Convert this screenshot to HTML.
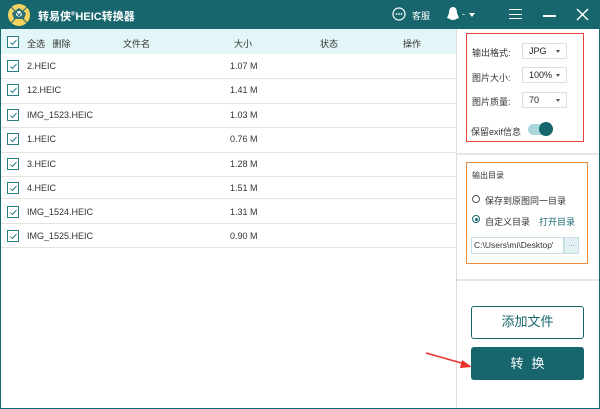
<!DOCTYPE html>
<html><head><meta charset="utf-8"><style>
*{margin:0;padding:0;box-sizing:border-box}
body{width:600px;height:409px;overflow:hidden;font-family:"Liberation Sans","Noto Sans CJK SC",sans-serif;font-size:9px;color:#333;background:#fff;position:relative}
.a{position:absolute}
.win{left:0;top:0;width:600px;height:409px;border:1px solid #176a70;border-top:none}
.title{left:0;top:0;width:600px;height:29px;background:#17666d}
.cb{width:12px;height:12px;border:1px solid #2a7f87;background:#fff}
.cb svg{position:absolute;left:1px;top:1px}
.row{left:1px;width:455px;height:1px;background:#e3e3e3}
.sel{width:45px;height:16px;border:1px solid #ddd;background:#fff;font-size:9px;padding-left:6px;line-height:14px;color:#222}
.sel:after{content:"";position:absolute;right:6px;top:6px;border-left:2px solid transparent;border-right:2px solid transparent;border-top:3px solid #555}
</style></head><body>
<div class="a title"></div>
<div class="a win"></div>
<svg class="a" style="left:7px;top:3px" width="24" height="24" viewBox="0 0 24 24"><circle cx="12" cy="12" r="11" fill="#f4d35e"/><path d="M5 10 L12 5 L19 10 L17 16 L7 16Z" fill="#2e6f74"/><circle cx="12" cy="11" r="3" fill="#fff"/><path d="M4 4 L20 20 M20 4 L4 20" stroke="#2e6f74" stroke-width="1.2"/></svg>
<div class="a" style="left:38px;top:8px;color:#fff;font-size:11px;font-weight:bold">转易侠<sup style="font-size:6px">®</sup>HEIC转换器</div>
<svg class="a" style="left:392px;top:7px" width="14" height="14"><circle cx="7" cy="7" r="6" fill="none" stroke="#fff" stroke-width="1.2"/><circle cx="4.5" cy="7" r=".9" fill="#fff"/><circle cx="7" cy="7" r=".9" fill="#fff"/><circle cx="9.5" cy="7" r=".9" fill="#fff"/></svg>
<div class="a" style="left:412px;top:9px;color:#fff;font-size:9px">客服</div>
<svg class="a" style="left:446px;top:6px" width="14" height="16"><path d="M7 1C4 1 3 4 3 7L1 12C3 12 4 14 7 14C10 14 11 12 13 12L11 7C11 4 10 1 7 1Z" fill="#fff"/></svg>
<div class="a" style="left:462px;top:9px;color:#fff">-</div>
<div class="a" style="left:469px;top:13px;border-left:3px solid transparent;border-right:3px solid transparent;border-top:4px solid #fff"></div>
<div class="a" style="left:509px;top:9px;width:13px;height:10px;border-top:1.5px solid #fff;border-bottom:1.5px solid #fff"></div>
<div class="a" style="left:509px;top:13.5px;width:13px;height:1.5px;background:#fff"></div>
<div class="a" style="left:543px;top:15px;width:13px;height:1.5px;background:#fff"></div>
<svg class="a" style="left:576px;top:8px" width="13" height="13"><path d="M1 1L12 12M12 1L1 12" stroke="#fff" stroke-width="1.5"/></svg>

<div class="a" style="left:1px;top:29px;width:455px;height:25px;background:#e2f6f8"></div>
<div class="a cb" style="left:7px;top:36px"><svg width="9" height="9"><path d="M1.5 4.5L3.5 6.5L7.5 2" stroke="#2a7f87" fill="none" stroke-width="1"/></svg></div>
<div class="a" style="left:27px;top:37px">全选&nbsp;&nbsp;&nbsp;删除</div>
<div class="a" style="left:123px;top:37px">文件名</div>
<div class="a" style="left:234px;top:37px">大小</div>
<div class="a" style="left:320px;top:37px">状态</div>
<div class="a" style="left:403px;top:37px">操作</div>

<div class="a" style="left:456px;top:29px;width:1px;height:379px;background:#ddd"></div>

<!-- rows -->
<div class="a row" style="top:78px"></div><div class="a row" style="top:103px"></div><div class="a row" style="top:127px"></div><div class="a row" style="top:152px"></div><div class="a row" style="top:176px"></div><div class="a row" style="top:198px"></div><div class="a row" style="top:223px"></div><div class="a row" style="top:247px"></div>

<div class="a cb" style="left:7px;top:60px"><svg width="9" height="9"><path d="M1.5 4.5L3.5 6.5L7.5 2" stroke="#2a7f87" fill="none"/></svg></div><div class="a" style="left:27px;top:61px">2.HEIC</div><div class="a" style="left:230px;top:61px">1.07 M</div>
<div class="a cb" style="left:7px;top:84px"><svg width="9" height="9"><path d="M1.5 4.5L3.5 6.5L7.5 2" stroke="#2a7f87" fill="none"/></svg></div><div class="a" style="left:27px;top:85px">12.HEIC</div><div class="a" style="left:230px;top:85px">1.41 M</div>
<div class="a cb" style="left:7px;top:109px"><svg width="9" height="9"><path d="M1.5 4.5L3.5 6.5L7.5 2" stroke="#2a7f87" fill="none"/></svg></div><div class="a" style="left:27px;top:110px">IMG_1523.HEIC</div><div class="a" style="left:230px;top:110px">1.03 M</div>
<div class="a cb" style="left:7px;top:133px"><svg width="9" height="9"><path d="M1.5 4.5L3.5 6.5L7.5 2" stroke="#2a7f87" fill="none"/></svg></div><div class="a" style="left:27px;top:134px">1.HEIC</div><div class="a" style="left:230px;top:134px">0.76 M</div>
<div class="a cb" style="left:7px;top:158px"><svg width="9" height="9"><path d="M1.5 4.5L3.5 6.5L7.5 2" stroke="#2a7f87" fill="none"/></svg></div><div class="a" style="left:27px;top:159px">3.HEIC</div><div class="a" style="left:230px;top:159px">1.28 M</div>
<div class="a cb" style="left:7px;top:182px"><svg width="9" height="9"><path d="M1.5 4.5L3.5 6.5L7.5 2" stroke="#2a7f87" fill="none"/></svg></div><div class="a" style="left:27px;top:183px">4.HEIC</div><div class="a" style="left:230px;top:183px">1.51 M</div>
<div class="a cb" style="left:7px;top:206px"><svg width="9" height="9"><path d="M1.5 4.5L3.5 6.5L7.5 2" stroke="#2a7f87" fill="none"/></svg></div><div class="a" style="left:27px;top:207px">IMG_1524.HEIC</div><div class="a" style="left:230px;top:207px">1.31 M</div>
<div class="a cb" style="left:7px;top:230px"><svg width="9" height="9"><path d="M1.5 4.5L3.5 6.5L7.5 2" stroke="#2a7f87" fill="none"/></svg></div><div class="a" style="left:27px;top:231px">IMG_1525.HEIC</div><div class="a" style="left:230px;top:231px">0.90 M</div>

<!-- right panel -->
<div class="a" style="left:466px;top:33px;width:118px;height:109px;border:1.5px solid #e5413f"></div>
<div class="a" style="left:472px;top:46px">输出格式:</div><div class="a sel" style="left:522px;top:43px">JPG</div>
<div class="a" style="left:472px;top:71px">图片大小:</div><div class="a sel" style="left:522px;top:67px">100%</div>
<div class="a" style="left:472px;top:95px">图片质量:</div><div class="a sel" style="left:522px;top:92px">70</div>
<div class="a" style="left:471px;top:125px">保留exif信息</div>
<div class="a" style="left:528px;top:124px;width:24px;height:11px;border-radius:6px;background:#a9d7db"></div>
<div class="a" style="left:539px;top:122px;width:14px;height:14px;border-radius:50%;background:#17666d"></div>
<div class="a" style="left:457px;top:153px;width:142px;height:2px;background:#e6e6e6"></div>

<div class="a" style="left:466px;top:162px;width:122px;height:102px;border:1.5px solid #f08c3c"></div>
<div class="a" style="left:472px;top:170px;font-size:8px">输出目录</div>
<div class="a" style="left:472px;top:195px;width:8px;height:8px;border:1px solid #555;border-radius:50%"></div>
<div class="a" style="left:485px;top:194px">保存到原图同一目录</div>
<div class="a" style="left:472px;top:215px;width:8px;height:8px;border:1px solid #17666d;border-radius:50%"></div>
<div class="a" style="left:474.5px;top:217.5px;width:3px;height:3px;background:#17666d;border-radius:50%"></div>
<div class="a" style="left:485px;top:215px">自定义目录</div>
<div class="a" style="left:539px;top:215px;color:#17666d">打开目录</div>
<div class="a" style="left:471px;top:237px;width:93px;height:17px;border:1px solid #c8dfe2;padding-left:2px;line-height:15px;font-size:8.5px;overflow:hidden;white-space:nowrap">C:\Users\mi\Desktop'</div>
<div class="a" style="left:564px;top:237px;width:15px;height:17px;border:1px solid #c8dfe2;background:#e2f1f3;font-size:7px;text-align:center;line-height:14px;color:#777">...</div>
<div class="a" style="left:457px;top:279px;width:142px;height:2px;background:#e6e6e6"></div>

<div class="a" style="left:471px;top:306px;width:113px;height:33px;border:1.5px solid #17666d;border-radius:3px;text-align:center;line-height:30px;font-size:13px;color:#17666d">添加文件</div>
<div class="a" style="left:471px;top:347px;width:113px;height:33px;background:#17666d;border-radius:3px;text-align:center;line-height:33px;font-size:13px;color:#fff;letter-spacing:8px;padding-left:8px">转换</div>
<svg class="a" style="left:425px;top:352px" width="50" height="20"><path d="M1 1L40 12" stroke="#e8302c" stroke-width="1.5"/><path d="M37 8L47 15L35 16Z" fill="#e8302c"/></svg>
</body></html>
